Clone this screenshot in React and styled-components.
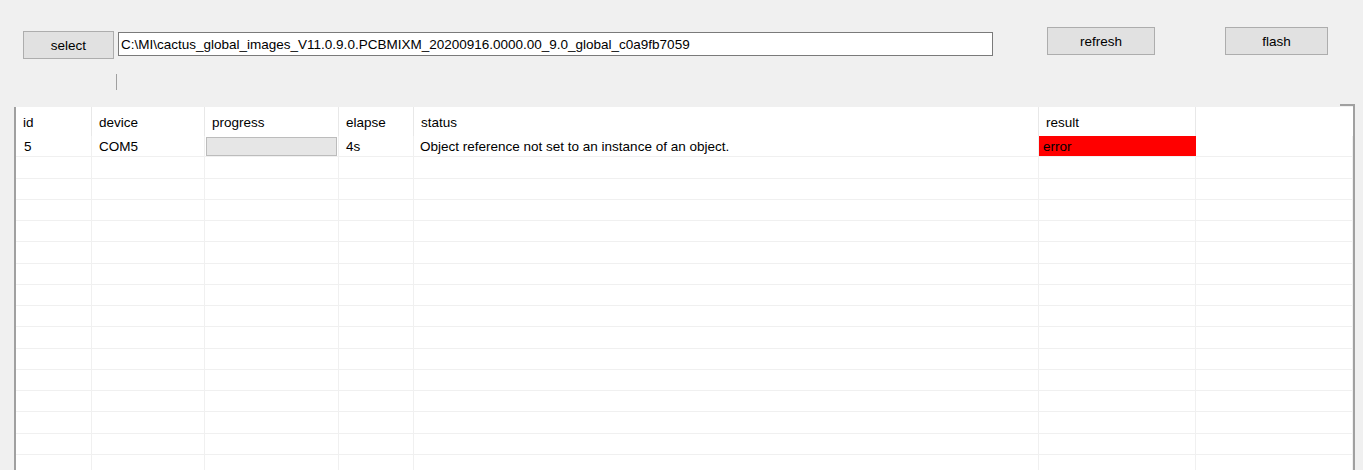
import React from "react";
import styled, { createGlobalStyle } from "styled-components";

const Global = createGlobalStyle`
  html, body { margin: 0; padding: 0; background: #f0f0f0; overflow: hidden; }
  body { font-family: "Liberation Sans", Arial, sans-serif; font-size: 13.5px; color: #000; }
`;

const Page = styled.div`
  width: 1363px;
  height: 470px;
  display: flex;
  flex-direction: column;
  overflow: hidden;
`;

const Toolbar = styled.div`
  display: flex;
  align-items: flex-start;
  flex-shrink: 0;
  height: 74px;
  padding-left: 23px;
`;

const Button = styled.button`
  box-sizing: border-box;
  width: ${(p) => p.$w}px;
  height: 28px;
  margin-top: ${(p) => p.$top}px;
  margin-left: ${(p) => p.$left || 0}px;
  background: #e1e1e1;
  border: 1px solid #adadad;
  font-family: "Liberation Sans", Arial, sans-serif;
  font-size: 13.5px;
  color: #000;
  padding: 0;
  display: flex;
  align-items: center;
  justify-content: center;
`;

const PathInput = styled.div`
  box-sizing: border-box;
  width: 875px;
  height: 24px;
  margin-top: 32px;
  margin-left: 4px;
  background: #fff;
  border: 1px solid #7a7a7a;
  padding-left: 2px;
  display: flex;
  align-items: center;
  white-space: nowrap;
`;

const CaretRow = styled.div`
  flex-shrink: 0;
  height: 30px;
  padding-left: 116px;
`;

const Caret = styled.div`
  width: 1px;
  height: 16px;
  background: #a0a0a0;
`;

const Grid = styled.div`
  position: relative;
  margin-left: 14px;
  width: 1337px;
  flex: 1;
  min-height: 0;
  background: #fff;
  border-left: 2px solid #a0a0a0;
  border-right: 2px solid #a0a0a0;
  margin-top: 3px;
  &::before {
    content: "";
    position: absolute;
    right: -2px;
    top: -3px;
    width: 15px;
    height: 2px;
    background: #a0a0a0;
  }
  &::after {
    content: "";
    position: absolute;
    right: -2px;
    top: -3px;
    width: 2px;
    height: 3px;
    background: #a0a0a0;
  }
`;

const Body = styled.div`
  height: 100%;
  overflow: hidden;
`;

const cols = "76px 113px 134px 75px 625px 157px 157px";

const HeaderRow = styled.div`
  display: grid;
  grid-template-columns: ${cols};
  height: 29px;
`;

const HeaderCell = styled.div`
  box-sizing: border-box;
  border-right: 1px solid ${(p) => (p.$last ? "transparent" : "#e8e8e8")};
  padding-left: 7px;
  display: flex;
  align-items: center;
  padding-top: 1px;
`;

const Row = styled.div`
  display: grid;
  grid-template-columns: ${cols};
  height: 21.25px;
  box-sizing: border-box;
  border-bottom: 1px solid #f0f0f0;
`;

const Cell = styled.div`
  box-sizing: border-box;
  border-right: 1px solid #f0f0f0;
  padding-left: ${(p) => p.$pad ?? 7}px;
  display: flex;
  align-items: center;
  white-space: nowrap;
  overflow: hidden;
  ${(p) => p.$error && "background: #ff0000; border-right-color: #ff0000;"}
`;

const ProgressCell = styled.div`
  box-sizing: border-box;
  border-right: 1px solid #f0f0f0;
  padding: 1px 1px 0 1px;
  display: flex;
`;

const ProgressBar = styled.div`
  flex: 1;
  background: #e6e6e6;
  border: 1px solid #bcbcbc;
`;

const headers = ["id", "device", "progress", "elapse", "status", "result", ""];

export default function App() {
  const empty = Array.from({ length: 15 });
  return (
    <Page>
      <Global />
      <Toolbar>
        <Button $w={91} $top={31}>select</Button>
        <PathInput>
          C:\MI\cactus_global_images_V11.0.9.0.PCBMIXM_20200916.0000.00_9.0_global_c0a9fb7059
        </PathInput>
        <Button $w={108} $top={27} $left={54}>refresh</Button>
        <Button $w={103} $top={27} $left={70}>flash</Button>
      </Toolbar>
      <CaretRow>
        <Caret />
      </CaretRow>
      <Grid>
        <Body>
          <HeaderRow>
            {headers.map((h, i) => (
              <HeaderCell key={i} $last={i === headers.length - 1}>{h}</HeaderCell>
            ))}
          </HeaderRow>
          <Row>
            <Cell $pad={8}>5</Cell>
            <Cell>COM5</Cell>
            <ProgressCell><ProgressBar /></ProgressCell>
            <Cell>4s</Cell>
            <Cell $pad={6}>Object reference not set to an instance of an object.</Cell>
            <Cell $pad={4} $error>error</Cell>
            <Cell />
          </Row>
          {empty.map((_, i) => (
            <Row key={i}>
              {headers.map((_, j) => (
                <Cell key={j} />
              ))}
            </Row>
          ))}
        </Body>
      </Grid>
    </Page>
  );
}
